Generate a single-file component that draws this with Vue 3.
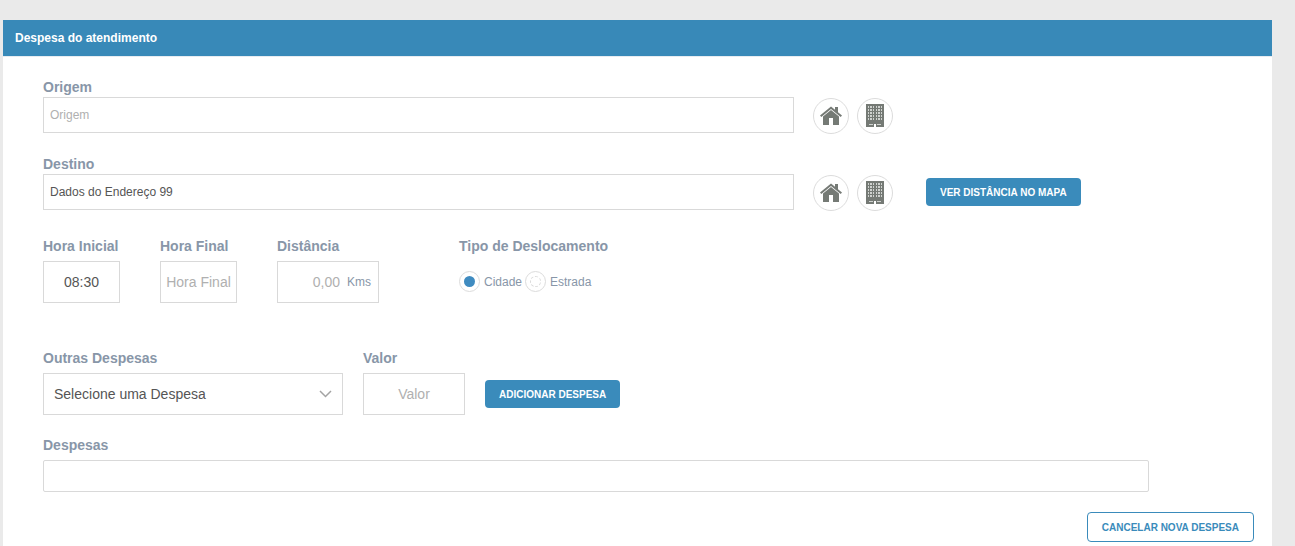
<script setup>
import { ref } from 'vue'

const origem = ref('')
const destino = ref('Dados do Endereço 99')
const horaInicial = ref('08:30')
const horaFinal = ref('')
const distancia = ref('')
const tipo = ref('cidade')
const despesa = ref('')
const valor = ref('')

const rotas = [
  { id: 'origem', label: 'Origem', model: origem, mapa: false },
  { id: 'destino', label: 'Destino', model: destino, mapa: true }
]
const janelas = [0, 1, 2, 3, 4]
</script>

<template>
  <main class="page">
    <section class="panel">
      <h1 class="panel-title">Despesa do atendimento</h1>
      <form class="form" @submit.prevent>
        <div v-for="r in rotas" :key="r.id" class="route">
          <div class="field">
            <label :for="r.id">{{ r.label }}</label>
            <input :id="r.id" v-model="r.model.value" class="box small" type="text" :placeholder="r.label" />
          </div>
          <div class="actions">
            <button class="round" type="button" aria-label="Residência">
              <svg width="22" height="20" viewBox="0 0 22 20" aria-hidden="true">
                <path fill="#757a75" d="M0 9.500 11 .4l4 3.300V1h3v5.200l4 3.300-1.300 1.500L11 3 1.300 11z" />
                <path fill="#757a75" d="M3 10.500 11 3.900l8 6.600V19h-6v-7H9v7H3z" />
              </svg>
            </button>
            <button class="round" type="button" aria-label="Empresa">
              <svg width="18" height="24" viewBox="0 0 18 24" aria-hidden="true">
                <path fill="#757a75" d="M0 0h18v23H0z" />
                <g fill="#cfd2cf">
                  <template v-for="n in janelas" :key="n">
                    <path :d="`M2 ${2 + n * 3}h1v2H2zM4 ${2 + n * 3}h2v2H4zM7 ${2 + n * 3}h1v2H7z`" />
                    <path :d="`M10 ${2 + n * 3}h1v2h-1zM12 ${2 + n * 3}h2v2h-2zM15 ${2 + n * 3}h1v2h-1z`" />
                  </template>
                  <path d="M3 20h4v1H3zM11 20h4v1h-4z" />
                </g>
                <path fill="#fff" d="M8 20h2v3H8z" />
              </svg>
            </button>
            <button v-if="r.mapa" class="btn map" type="button">VER DISTÂNCIA NO MAPA</button>
          </div>
        </div>

        <div class="row times">
          <div class="field time">
            <label for="hora-inicial">Hora Inicial</label>
            <input id="hora-inicial" v-model="horaInicial" class="box tall center" type="text" />
          </div>
          <div class="field time">
            <label for="hora-final">Hora Final</label>
            <input id="hora-final" v-model="horaFinal" class="box tall center" type="text" placeholder="Hora Final" />
          </div>
          <div class="field amount">
            <label for="distancia">Distância</label>
            <div class="box tall unit-box">
              <input id="distancia" v-model="distancia" class="bare" type="text" placeholder="0,00" />
              <span class="unit">Kms</span>
            </div>
          </div>
          <fieldset class="types">
            <legend>Tipo de Deslocamento</legend>
            <div class="radios">
              <label class="radio"><input v-model="tipo" type="radio" name="tipo" value="cidade" />Cidade</label>
              <label class="radio"><input v-model="tipo" type="radio" name="tipo" value="estrada" />Estrada</label>
            </div>
          </fieldset>
        </div>

        <div class="row extras">
          <div class="field select-field">
            <label for="despesa">Outras Despesas</label>
            <div class="select-wrap">
              <select id="despesa" v-model="despesa" class="box tall">
                <option value="">Selecione uma Despesa</option>
              </select>
              <svg class="chevron" width="13" height="8" viewBox="0 0 13 8" aria-hidden="true">
                <path d="M1 1l5.500 5.500L12 1" fill="none" stroke="#a3a3a3" stroke-width="1.500" />
              </svg>
            </div>
          </div>
          <div class="field amount">
            <label for="valor">Valor</label>
            <input id="valor" v-model="valor" class="box tall center" type="text" placeholder="Valor" />
          </div>
          <button class="btn add" type="button">ADICIONAR DESPESA</button>
        </div>

        <div class="field list">
          <label for="despesas">Despesas</label>
          <input id="despesas" class="box low" type="text" readonly />
        </div>

        <div class="footer">
          <button class="btn outline" type="button">CANCELAR NOVA DESPESA</button>
        </div>
      </form>
    </section>
  </main>
</template>

<style>
body {
  background: #eaeaea;
}
</style>

<style scoped>
* {
  box-sizing: border-box;
}
.page {
  display: flex;
  min-height: 100vh;
  padding: 20px 23px 0 3px;
  font-family: "Liberation Sans", Arial, sans-serif;
  font-size: 14px;
  color: #555;
}
.panel {
  flex: 1;
  min-width: 0;
  background: #fff;
}
.panel-title {
  margin: 0;
  padding: 0 12px;
  line-height: 36px;
  font-size: 12px;
  font-weight: bold;
  color: #fff;
  background: #3889b8;
  border-bottom: 1px solid #e7ecf1;
}
.form {
  padding: 20px 0 4px 40px;
}
input,
select,
button {
  font-family: inherit;
  margin: 0;
}
.route {
  display: grid;
  grid-template-columns: minmax(0, 1fr) 459px;
  column-gap: 19px;
  align-items: start;
  margin-bottom: 20px;
}
.field {
  display: flex;
  flex-direction: column;
  min-width: 0;
}
.field > label,
legend {
  padding: 0;
  line-height: 20px;
  font-size: 14px;
  font-weight: bold;
  color: #8896a8;
  white-space: nowrap;
}
.box {
  width: 100%;
  min-width: 0;
  border: 1px solid #d9d9d9;
  border-radius: 0;
  background: #fff;
  color: #555;
  font-size: 14px;
  outline: none;
}
.small {
  height: 36px;
  padding: 0 6px;
  font-size: 12px;
}
.tall {
  height: 42px;
  margin-top: 5px;
  padding: 0 5px;
}
.low {
  height: 32px;
  margin-top: 5px;
  border-radius: 2px;
}
.center {
  text-align: center;
}
input::placeholder {
  color: #b0b0b0;
  opacity: 1;
}
.actions {
  display: flex;
  align-items: flex-start;
  gap: 8px;
  padding-top: 21px;
}
.round {
  display: flex;
  align-items: center;
  justify-content: center;
  width: 36px;
  height: 36px;
  padding: 0;
  border: 1px solid #dcdcdc;
  border-radius: 50%;
  background: #fff;
}
.btn {
  height: 28px;
  padding: 0 14px;
  border: 0;
  border-radius: 4px;
  background: #3a8bbb;
  color: #fff;
  font-size: 10px;
  font-weight: bold;
  white-space: nowrap;
}
.map {
  margin: 3px 0 0 25px;
}
.row {
  display: flex;
  align-items: flex-start;
}
.times {
  gap: 40px;
  margin-top: 25px;
}
.time {
  width: 77px;
}
.amount {
  width: 102px;
}
.unit-box {
  display: flex;
  align-items: center;
  gap: 7px;
  padding: 0 7px;
}
.bare {
  flex: 1;
  width: 0;
  padding: 0;
  border: 0;
  outline: none;
  font-size: 14px;
  text-align: right;
}
.unit {
  font-size: 12px;
  color: #8896a8;
}
.types {
  min-width: 0;
  margin: 0 0 0 40px;
  padding: 0;
  border: 0;
}
.radios {
  display: flex;
  gap: 3px;
  padding-top: 15px;
}
.radio {
  display: flex;
  align-items: center;
  gap: 4px;
  font-size: 12px;
  color: #8896a8;
}
.radio input {
  appearance: none;
  display: grid;
  place-content: center;
  width: 21px;
  height: 21px;
  border: 1px solid #dcdcdc;
  border-radius: 50%;
  background: #fff;
}
.radio input::before {
  content: "";
  width: 11px;
  height: 11px;
  border: 1px dashed #dcdcdc;
  border-radius: 50%;
  box-sizing: border-box;
}
.radio input:checked::before {
  border: 0;
  background: #3f8bc0;
}
.extras {
  gap: 20px;
  margin-top: 45px;
}
.select-field {
  width: 300px;
}
.select-wrap {
  position: relative;
}
select.box {
  display: block;
  appearance: none;
  padding: 0 30px 0 10px;
}
.chevron {
  position: absolute;
  right: 11px;
  top: 22px;
  pointer-events: none;
}
.add {
  margin-top: 32px;
}
.list {
  margin: 20px 123px 0 0;
}
.footer {
  display: flex;
  justify-content: flex-end;
  padding: 20px 18px 0 0;
}
.outline {
  height: 30px;
  border: 1px solid #3a8bbb;
  background: #fff;
  color: #3a8bbb;
}
</style>
